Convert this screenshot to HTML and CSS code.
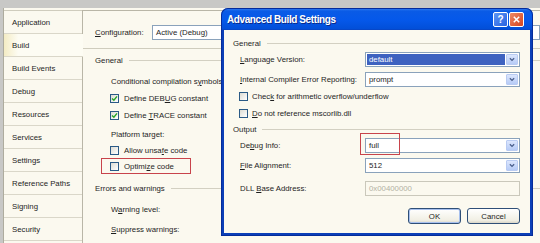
FILE: index.html
```html
<!DOCTYPE html>
<html>
  <head>
    <meta charset="utf-8">
    <title>Advanced Build Settings</title>
    <link rel="stylesheet" href="styles.css">
  </head>
  <body>
    <div class="ide">
      <div class="tabs">
        <div class="tab tab-first">Application</div>
        <div class="tab tab-active">Build</div>
        <div class="tab">Build Events</div>
        <div class="tab">Debug</div>
        <div class="tab">Resources</div>
        <div class="tab">Services</div>
        <div class="tab">Settings</div>
        <div class="tab">Reference Paths</div>
        <div class="tab">Signing</div>
        <div class="tab">Security</div>
      </div>

      <div class="panel">
        <div class="config-row">
          <span class="config-label"><u>C</u>onfiguration:</span>
          <div class="combo combo-config"><span class="combo-value">Active (Debug)</span></div>
        </div>
        <div class="rule"></div>

        <div class="group gap-5"><span>General</span><div class="group-line"></div></div>
        <div class="row indent gap-9"><span>Conditional compilation s<u>y</u>mbols:</span></div>
        <div class="row check-row gap-5"><span class="cb checked"><svg viewBox="0 0 7 7"><path d="M1 3.4 L2.9 5.3 L6 1.4"/></svg></span><span>Define DEB<u>U</u>G constant</span></div>
        <div class="row check-row gap-5"><span class="cb checked"><svg viewBox="0 0 7 7"><path d="M1 3.4 L2.9 5.3 L6 1.4"/></svg></span><span>Define <u>T</u>RACE constant</span></div>
        <div class="row indent gap-7"><span>Platform tar<u>g</u>et:</span></div>
        <div class="row check-row gap-4"><span class="cb"></span><span>Allow unsa<u>f</u>e code</span></div>
        <div class="mark-row">
          <div class="mark-box"><span class="cb"></span><span>Optimi<u>z</u>e code</span></div>
        </div>

        <div class="group gap-8"><span>Errors and warnings</span><div class="group-line"></div></div>
        <div class="row indent gap-9"><span>W<u>a</u>rning level:</span></div>
        <div class="row indent gap-8"><span><u>S</u>uppress warnings:</span></div>
      </div>
    </div>

    <div class="dialog">
      <div class="titlebar">
        <span class="title">Advanced Build Settings</span>
        <div class="title-buttons">
          <span class="tbtn tbtn-help">?</span>
          <span class="tbtn tbtn-close"><svg viewBox="0 0 10 10"><path d="M2 2 L8 8 M8 2 L2 8"/></svg></span>
        </div>
      </div>

      <div class="dialog-body">
        <div class="dgroup dgroup-first"><span>General</span><div class="group-line"></div></div>

        <div class="field dgap-3">
          <span class="field-label"><u>L</u>anguage Version:</span>
          <div class="combo"><span class="combo-value selected">default</span><span class="drop"><svg viewBox="0 0 7 5"><path d="M1 1 L3.5 3.5 L6 1"/></svg></span></div>
        </div>
        <div class="field dgap-5">
          <span class="field-label"><u>I</u>nternal Compiler Error Reporting:</span>
          <div class="combo"><span class="combo-value">prompt</span><span class="drop"><svg viewBox="0 0 7 5"><path d="M1 1 L3.5 3.5 L6 1"/></svg></span></div>
        </div>

        <div class="dcheck dgap-3"><span class="cb"></span><span>Chec<u>k</u> for arithmetic overflow/underflow</span></div>
        <div class="dcheck dgap-4"><span class="cb"></span><span><u>D</u>o not reference mscorlib.dll</span></div>

        <div class="dgroup dgap-3"><span>Output</span><div class="group-line"></div></div>

        <div class="field dgap-3">
          <span class="field-label">De<u>b</u>ug Info:</span>
          <div class="combo combo-marked"><span class="combo-value">full</span><span class="drop"><svg viewBox="0 0 7 5"><path d="M1 1 L3.5 3.5 L6 1"/></svg></span><span class="mark-outline"></span></div>
        </div>
        <div class="field dgap-5">
          <span class="field-label"><u>F</u>ile Alignment:</span>
          <div class="combo"><span class="combo-value">512</span><span class="drop"><svg viewBox="0 0 7 5"><path d="M1 1 L3.5 3.5 L6 1"/></svg></span></div>
        </div>
        <div class="field dgap-8">
          <span class="field-label">DLL <u>B</u>ase Address:</span>
          <div class="textbox disabled">0x00400000</div>
        </div>

        <div class="buttons">
          <span class="btn btn-default">OK</span>
          <span class="btn">Cancel</span>
        </div>
      </div>
    </div>
  </body>
</html>
```

FILE: styles.css
```css
html, body, div, span{
  margin:0px;
  padding:0px;
}
body{
  width:540px;
  height:243px;
  overflow:hidden;
  position:relative;
  background-color:#c8c8c6;
  font-family:"Liberation Sans", Arial, sans-serif;
  font-size:7.8px;
  color:#1e1e1e;
}
u{
  text-decoration:underline;
  text-underline-offset:1px;
}

/* project designer behind the dialog */
.ide{
  display:flex;
  margin:8px 0px 0px 3px;
  height:235px;
  background-color:#fbf9ef;
}
.tabs{
  width:79px;
  flex-shrink:0;
  box-sizing:border-box;
  padding-top:2px;
  border-left:1px solid #aeac9e;
}
.tab{
  height:22px;
  display:flex;
  align-items:center;
  padding-left:8px;
  border-bottom:1px solid #dad7c9;
}
.tab-first{
  border-top:1px solid #cfccbd;
}
.tab-active{
  position:relative;
  z-index:1;
  margin-right:-1px;
  background:linear-gradient(to right, #f4ecc4, #fdfcf3 18%);
}
.panel{
  flex:1;
  margin-top:2px;
  padding-left:12px;
  border-left:1px solid #b9b6a7;
  border-top:1px solid #b9b6a7;
}
.config-row{
  display:flex;
  align-items:center;
  height:17px;
  margin-top:13px;
}
.config-label{
  width:57px;
}
.combo-config{
  width:150px;
  height:17px;
}
.rule{
  height:7px;
  margin-left:-12px;
  border-bottom:1px solid #cfccbd;
}
.group, .dgroup{
  display:flex;
  align-items:center;
  height:12px;
}
.group-line{
  flex:1;
  height:1px;
  margin-left:6px;
  background-color:#d3d0c2;
}
.row{
  display:flex;
  align-items:center;
  height:12px;
}
.indent{
  padding-left:16px;
}
.check-row{
  padding-left:15px;
}
.gap-4{ margin-top:4px; }
.gap-5{ margin-top:5px; }
.gap-7{ margin-top:7px; }
.gap-8{ margin-top:8px; }
.gap-9{ margin-top:9px; }

.mark-row{
  margin-top:2px;
  padding-left:6px;
}
.mark-box{
  display:flex;
  align-items:center;
  width:80px;
  height:14px;
  padding-left:8px;
  box-sizing:content-box;
  border:1px solid #c8434b;
}

/* checkbox */
.cb{
  width:7px;
  height:7px;
  flex-shrink:0;
  margin-right:5px;
  border:1px solid #2a5a86;
  background:linear-gradient(135deg, #dcdbd3, #ffffff);
  display:flex;
}
.cb svg{
  width:7px;
  height:7px;
}
.cb path{
  fill:none;
  stroke:#26a326;
  stroke-width:1.4;
}

/* combo box */
.combo{
  position:relative;
  flex:1;
  display:flex;
  height:15px;
  box-sizing:border-box;
  border:1px solid #8aa2bb;
  background-color:#fff;
}
.combo-value{
  flex:1;
  display:flex;
  align-items:center;
  margin:1px;
  padding-left:2px;
}
.combo-value.selected{
  background-color:#3e62c0;
  color:#fff;
}
.drop{
  width:12px;
  margin:1px 1px 1px 0px;
  display:flex;
  align-items:center;
  justify-content:center;
  border:1px solid #b9cbf2;
  border-radius:1px;
  box-sizing:border-box;
  background:linear-gradient(to bottom, #dce6fd, #b6cbf6);
}
.drop svg{
  width:6px;
  height:5px;
}
.drop path{
  fill:none;
  stroke:#4a5f8c;
  stroke-width:1.5;
}
.mark-outline{
  position:absolute;
  left:-6px;
  top:-6px;
  width:38px;
  height:20px;
  border:1px solid #c8434b;
}

/* dialog window */
.dialog{
  position:absolute;
  left:221px;
  top:8px;
  width:312px;
  height:228px;
  display:flex;
  flex-direction:column;
  border-radius:7px 7px 0px 0px;
  background:linear-gradient(to bottom, #3d86f4 0px, #0a5be6 3px, #0558ea 12px, #024fd8 21px, #0b3fb8 22px, #0b3fb8 100%);
  box-shadow:inset 0px 0px 0px 1px #062c9a;
}
.titlebar{
  height:22px;
  display:flex;
  align-items:center;
  justify-content:space-between;
  padding:0px 9px 0px 6px;
}
.title{
  color:#fff;
  font-weight:bold;
  font-size:10px;
  letter-spacing:-0.4px;
  text-shadow:1px 1px 0px #0a2a8a;
}
.title-buttons{
  display:flex;
  gap:1px;
  margin-top:1px;
}
.tbtn{
  width:13px;
  height:13px;
  border:1px solid #ffffff;
  border-radius:2px;
  display:flex;
  align-items:center;
  justify-content:center;
  color:#fff;
  font-weight:bold;
  font-size:10px;
}
.tbtn-help{
  background:linear-gradient(135deg, #5c95f5, #2a62e0);
}
.tbtn-close{
  background:linear-gradient(135deg, #ee8a66, #d4431e);
}
.tbtn-close svg{
  width:9px;
  height:9px;
}
.tbtn-close path{
  stroke:#fff;
  stroke-width:1.7;
}
.dialog-body{
  flex:1;
  margin:0px 3px 3px 3px;
  padding:0px 10px 0px 9px;
  background-color:#fbf9ef;
}
.dgroup-first{
  margin-top:7px;
}
.field{
  display:flex;
  align-items:center;
  height:15px;
  padding-left:7px;
}
.field-label{
  width:125px;
  flex-shrink:0;
}
.dcheck{
  display:flex;
  align-items:center;
  height:13px;
  padding-left:6px;
}
.dcheck .cb{
  margin-right:4px;
}
.dgap-3{ margin-top:3px; }
.dgap-4{ margin-top:4px; }
.dgap-5{ margin-top:5px; }
.dgap-8{ margin-top:8px; }

.textbox{
  flex:1;
  height:15px;
  box-sizing:border-box;
  display:flex;
  align-items:center;
  padding-left:3px;
  border:1px solid #cac8bb;
}
.textbox.disabled{
  color:#b3b1a4;
  background-color:#fbf9ef;
}
.buttons{
  display:flex;
  justify-content:flex-end;
  gap:6px;
  margin-top:12px;
}
.btn{
  width:53px;
  height:16px;
  box-sizing:border-box;
  display:flex;
  align-items:center;
  justify-content:center;
  border:1px solid #2f4f77;
  border-radius:3px;
  background:linear-gradient(to bottom, #ffffff, #f1efe4 80%, #d9d6c8);
}
.btn-default{
  box-shadow:inset 0px 0px 0px 1px #a8c1ee;
}
```
